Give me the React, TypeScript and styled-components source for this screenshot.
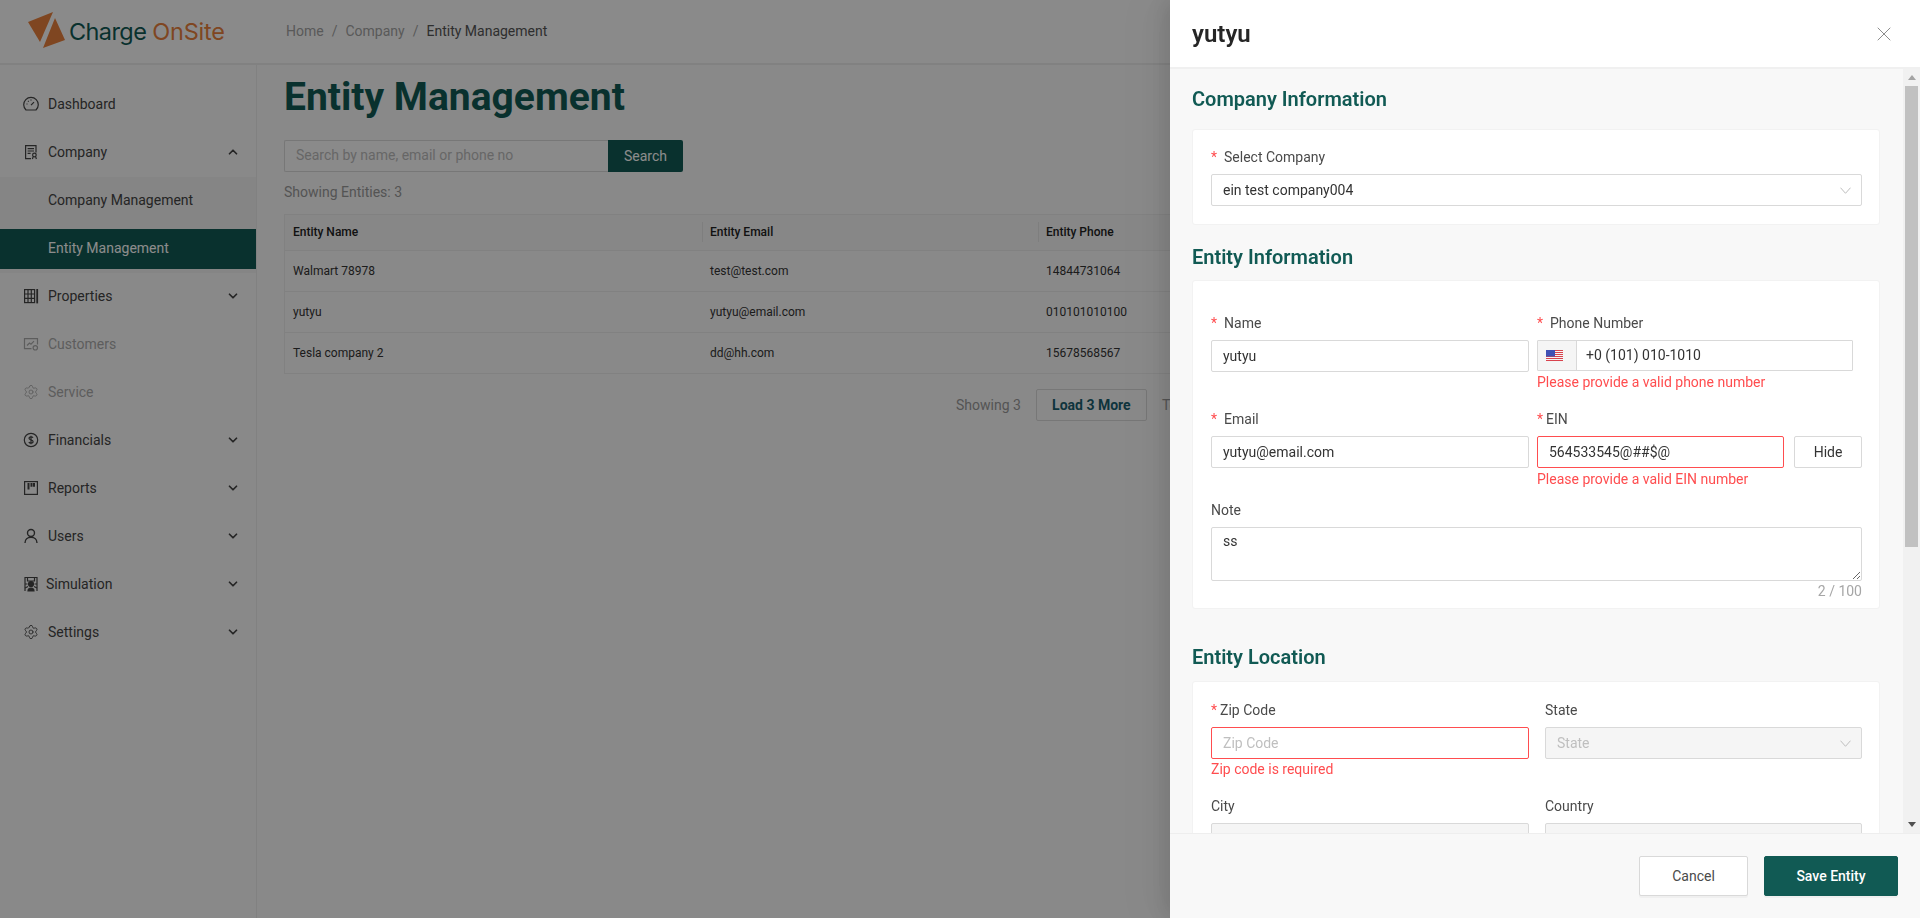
import React from "react";
import styled, { createGlobalStyle } from "styled-components";
import { ChevronDown, ChevronUp, Settings, X } from "lucide-react";

const Global = createGlobalStyle`
  html, body { margin: 0; height: 100%; overflow: hidden; }
  body { font-family: Roboto, "Liberation Sans", sans-serif; font-size: 14px; color: #333; background: #fafafa; }
  * { box-sizing: border-box; }
`;

const Page = styled.div`
  height: 100vh;
  display: grid;
  grid-template-rows: 65px 1fr;
`;
const TopBar = styled.header`
  display: flex;
  align-items: center;
  background: #fcfcfc;
  border-bottom: 2px solid #ececec;
  padding-bottom: 1px;
`;
const LogoWrap = styled.div`
  width: 286px;
  padding-left: 27px;
  display: flex;
  align-items: center;
  gap: 3px;
`;
const LogoText = styled.span`
  font-family: Inter, Roboto, sans-serif;
  font-size: 23.5px;
  letter-spacing: -0.6px;
  color: #115a54;
  white-space: nowrap;
`;
const LogoAccent = styled.span`
  color: #e8803c;
  letter-spacing: -0.2px;
`;
const Crumbs = styled.nav`
  display: flex;
  gap: 8px;
  color: #a3a3a3;
`;
const CrumbNow = styled.span`
  color: #555;
`;
const Shell = styled.div`
  display: grid;
  grid-template-columns: 257px 1fr;
  min-height: 0;
`;
const Side = styled.aside`
  background: #fafafa;
  border-right: 1px solid #ececec;
  padding-top: 19px;
`;
const SideItem = styled.div<{ $active?: boolean; $off?: boolean; $gap?: number }>`
  height: 40px;
  margin-bottom: 8px;
  padding: 0 16px 0 24px;
  display: flex;
  align-items: center;
  gap: ${(p) => p.$gap ?? 10}px;
  color: ${(p) => (p.$active ? "#fff" : p.$off ? "#aaa" : "#444")};
  background: ${(p) => (p.$active ? "#115a54" : "transparent")};
`;
const SideLabel = styled.span`
  flex: 1;
`;
const SubList = styled.div`
  background: #f2f2f2;
  padding: 3px 0 4px;
  margin: -3px 0 3px;
`;
const SubItem = styled(SideItem)`
  padding-left: 48px;
  padding-bottom: ${(p) => (p.$active ? 2 : 0)}px;
  margin-bottom: 9px;
  &:last-child { margin-bottom: 0; }
`;
const IconSvg = styled.svg`
  width: 16px;
  height: 16px;
  flex: none;
  fill: none;
  stroke: currentColor;
  stroke-width: 1.2;
  margin: 0 -1px;
`;
const GearIcon = styled(Settings)`
  flex: none;
  margin: 0 -1px;
`;
const Main = styled.main`
  padding: 10px 0 0 27px;
  min-width: 0;
`;
const Title = styled.h1`
  margin: 0 0 20px;
  font-size: 39px;
  line-height: 45px;
  font-weight: 700;
  color: #115a54;
`;
const SearchRow = styled.div`
  display: flex;
  height: 32px;
`;
const SearchInput = styled.input`
  width: 324px;
  padding: 0 11px 2px;
  border: 1px solid #d9d9d9;
  border-right: 0;
  border-radius: 2px 0 0 2px;
  background: #fcfcfc;
  font: inherit;
  &::placeholder { color: #bbb; }
`;
const SearchButton = styled.button`
  width: 75px;
  border: 0;
  border-radius: 0 2px 2px 0;
  background: #115a54;
  color: #fff;
  font: inherit;
`;
const Count = styled.div`
  margin: 10px 0 11px;
  line-height: 21px;
  color: #999;
`;
const Table = styled.div`
  width: 1612px;
  border: 1px solid #ececec;
  border-bottom: 0;
  font-size: 12px;
`;
const TRow = styled.div<{ $head?: boolean }>`
  height: ${(p) => (p.$head ? 36 : 41)}px;
  padding-bottom: ${(p) => (p.$head ? 2 : 0)}px;
  display: grid;
  grid-template-columns: 417px 336px 1fr;
  align-items: center;
  border-bottom: 1px solid #ececec;
  background: ${(p) => (p.$head ? "#f6f6f6" : "#fafafa")};
  font-weight: ${(p) => (p.$head ? 500 : 400)};
  color: ${(p) => (p.$head ? "#222" : "#333")};
`;
const TCell = styled.div<{ $divider?: boolean }>`
  padding-left: 7px;
  line-height: 20px;
  border-left: ${(p) => (p.$divider ? "1px solid #e6e6e6" : "1px solid transparent")};
`;
const Pager = styled.div`
  margin-top: 15px;
  width: 1612px;
  padding-left: 672px;
  display: flex;
  align-items: center;
  gap: 15px;
  color: #999;
`;
const LoadMore = styled.button`
  width: 111px;
  height: 32px;
  border: 1px solid #d9d9d9;
  border-radius: 2px;
  background: transparent;
  color: #1b5f70;
  font: inherit;
  font-weight: 700;
`;

const Overlay = styled.div`
  position: fixed;
  inset: 0;
  background: rgba(0, 0, 0, 0.45);
`;
const Drawer = styled.aside`
  position: fixed;
  top: 0;
  right: 0;
  bottom: 0;
  width: 750px;
  display: grid;
  grid-template-rows: 69px 1fr 85px;
  background: #fff;
  box-shadow: -6px 0 16px rgba(0, 0, 0, 0.08), -9px 0 28px rgba(0, 0, 0, 0.05), -12px 0 48px 16px rgba(0, 0, 0, 0.03);
`;
const DrawerHead = styled.div`
  display: flex;
  align-items: center;
  justify-content: space-between;
  padding: 0 24px 0 22px;
  border-bottom: 2px solid #f0f0f0;
`;
const DrawerTitle = styled.h2`
  margin: 0;
  font-size: 24px;
  font-weight: 600;
  color: #262626;
`;
const CloseBtn = styled.span`
  display: flex;
  color: #8c8c8c;
`;
const DrawerMiddle = styled.div`
  display: flex;
  min-height: 0;
  background: #f8f8f8;
`;
const DrawerBody = styled.div`
  flex: 1;
  min-width: 0;
  overflow: hidden;
  padding: 16px 23px 16px 22px;
`;
const ScrollTrack = styled.div`
  width: 17px;
  flex: none;
  background: #f1f1f1;
  display: flex;
  flex-direction: column;
`;
const ScrollArrow = styled.div<{ $down?: boolean }>`
  height: 17px;
  flex: none;
  display: flex;
  align-items: center;
  justify-content: center;
  &::before {
    content: "";
    border-left: 4.5px solid transparent;
    border-right: 4.5px solid transparent;
    border-bottom: ${(p) => (p.$down ? "0" : "5px solid #a3a3a3")};
    border-top: ${(p) => (p.$down ? "5px solid #505050" : "0")};
  }
`;
const ScrollThumb = styled.div`
  height: 461px;
  margin: 0 2px;
  background: #c1c1c1;
`;
const ScrollRest = styled.div`
  flex: 1;
`;
const SectionTitle = styled.h3<{ $after: number }>`
  margin: 0 0 ${(p) => p.$after}px;
  font-size: 20px;
  line-height: 28px;
  font-weight: 600;
  color: #115a54;
`;
const Card = styled.section<{ $top: number; $after: number; $bottom?: number }>`
  background: #fff;
  border: 1px solid #f2f2f2;
  border-radius: 3px;
  padding: ${(p) => p.$top}px 17px ${(p) => p.$bottom ?? 7}px 18px;
  margin-bottom: ${(p) => p.$after}px;
`;
const FormRow = styled.div<{ $gutter: number; $after: number }>`
  display: grid;
  grid-template-columns: 318px 1fr;
  column-gap: ${(p) => p.$gutter}px;
  margin-bottom: ${(p) => p.$after}px;
`;
const Label = styled.div<{ $gap?: number }>`
  height: 22px;
  line-height: 22px;
  margin-bottom: 6px;
  color: #4a4a4a;
  display: flex;
  gap: ${(p) => p.$gap ?? 7}px;
`;
const Star = styled.span`
  color: #ff4d4f;
`;
const Input = styled.input<{ $error?: boolean; $off?: boolean }>`
  width: 100%;
  height: 32px;
  padding: 0 11px;
  border: 1px solid ${(p) => (p.$error ? "#ff4d4f" : "#d9d9d9")};
  border-radius: 2px;
  background: ${(p) => (p.$off ? "#f5f5f5" : "#fff")};
  font: inherit;
  color: #333;
  outline: none;
  &::placeholder { color: #bfbfbf; }
`;
const SelectBox = styled.div<{ $off?: boolean; $last?: boolean }>`
  height: 32px;
  margin-bottom: ${(p) => (p.$last ? 11 : 0)}px;
  padding: 0 10px 0 11px;
  display: flex;
  align-items: center;
  justify-content: space-between;
  border: 1px solid #d9d9d9;
  border-radius: 2px;
  background: ${(p) => (p.$off ? "#f5f5f5" : "#fff")};
  color: ${(p) => (p.$off ? "#bfbfbf" : "#333")};
`;
const Caret = styled.svg`
  width: 11px;
  height: 7px;
  fill: none;
  stroke: #bfbfbf;
  stroke-width: 1;
`;
const PhoneBox = styled.div`
  width: 316px;
  height: 31px;
  margin-top: 1px;
  display: flex;
  border: 1px solid #d9d9d9;
  border-radius: 1px;
`;
const FlagBox = styled.div`
  width: 39px;
  background: #f5f5f5;
  border-right: 1px solid #d9d9d9;
  display: flex;
  align-items: center;
  justify-content: center;
  padding-right: 5px;
`;
const PhoneText = styled.div`
  padding-left: 9px;
  line-height: 29px;
  color: #333;
`;
const ErrorText = styled.div<{ $low?: boolean }>`
  height: 20px;
  line-height: ${(p) => (p.$low ? 22 : 20)}px;
  color: #ff4d4f;
`;
const EinRow = styled.div`
  display: grid;
  grid-template-columns: 247px 68px;
  column-gap: 10px;
`;
const HideBtn = styled.button`
  height: 32px;
  border: 1px solid #d9d9d9;
  border-radius: 2px;
  background: #fff;
  font: inherit;
  color: #333;
`;
const NoteArea = styled.textarea`
  display: block;
  width: 100%;
  height: 54px;
  padding: 2px 11px 4px;
  border: 1px solid #d9d9d9;
  border-radius: 2px;
  font: inherit;
  line-height: 22px;
  color: #333;
  outline: none;
`;
const Counter = styled.div`
  text-align: right;
  line-height: 20px;
  color: #a6a6a6;
`;
const DrawerFoot = styled.div`
  background: #f8f8f8;
  border-top: 1px solid #eee;
  display: flex;
  justify-content: flex-end;
  gap: 16px;
  padding: 22px 22px 0 0;
`;
const FootBtn = styled.button<{ $primary?: boolean }>`
  width: ${(p) => (p.$primary ? 134 : 109)}px;
  height: 40px;
  border: 1px solid ${(p) => (p.$primary ? "#115a54" : "#d9d9d9")};
  border-radius: 2px;
  background: ${(p) => (p.$primary ? "#115a54" : "#fff")};
  color: ${(p) => (p.$primary ? "#fff" : "#4a4a4a")};
  font: inherit;
  font-weight: ${(p) => (p.$primary ? 500 : 400)};
  box-shadow: 0 2px 0 rgba(0, 0, 0, 0.03);
`;

const Logo = () => (
  <svg width="39" height="38" viewBox="0 0 39 38" fill="#e8803c">
    <path d="M1 10 L26 0 L13 30 Z" />
    <path d="M28 6 L38 28 L16 36 Z" />
  </svg>
);
const Flag = () => (
  <svg width="17" height="12" viewBox="0 0 17 12">
    <rect width="17" height="12" fill="#f4f4f4" />
    {[0, 2, 4, 6, 8, 10].map((y) => (
      <rect key={y} y={y} width="17" height="1" fill="#d9434e" />
    ))}
    <rect width="9" height="6.5" fill="#3f51b5" />
  </svg>
);
const Gauge = () => (
  <IconSvg viewBox="0 0 16 16"><path d="M3 14h10a7.300 7.300 0 1 0-10 0z" /><path d="M8 9.200l3-3M3.500 8h1M8 3.500v1M5 5l.7.7" /></IconSvg>
);
const CompanyIcon = () => (
  <IconSvg viewBox="0 0 16 16" stroke="#115a54"><path d="M8 14.600H2.600V1.600h10.400v7" /><path d="M4.600 4.600h6.400M4.600 7h6.400M4.600 9.400h3" /><circle cx="11.400" cy="11" r="1.800" /><path d="M9.400 15l.8-2.400M13.400 15l-.8-2.400" /></IconSvg>
);
const BuildingIcon = () => (
  <IconSvg viewBox="0 0 16 16"><rect x="1.600" y="1.600" width="10" height="13" /><path d="M1.600 6h10M1.600 10.300h10M5 1.600v13M8.300 1.600v13" /><path d="M14.200 1v14.400" strokeWidth="1.800" /></IconSvg>
);
const CustomersIcon = () => (
  <IconSvg viewBox="0 0 16 16"><path d="M8.500 12.600H1.500V2.600h13v6" /><path d="M4 9.500l2.500-2.500 1.500 1.200 3-3" /><circle cx="12.300" cy="11.800" r="2.200" /></IconSvg>
);
const DollarIcon = () => (
  <IconSvg viewBox="0 0 16 16"><circle cx="8" cy="8" r="6.700" /><path d="M10 5.800c-.4-.7-1.100-1-2-1-1.200 0-2 .6-2 1.500 0 2.200 4.100 1.100 4.100 3.300 0 1-.9 1.600-2.100 1.600-1 0-1.800-.4-2.200-1.100M8 3.800v8.400" /></IconSvg>
);
const BoardIcon = () => (
  <IconSvg viewBox="0 0 16 16"><rect x="1.600" y="1.600" width="12.800" height="12.800" /><path d="M5.500 3v6.500M8.500 3v3.800M11 3v3.800" strokeWidth="2" /></IconSvg>
);
const UserIcon = () => (
  <IconSvg viewBox="0 0 16 16"><circle cx="8" cy="5" r="3.500" strokeWidth="1.400" /><path d="M2 15c0-3.500 2.500-5.800 6-5.800s6 2.300 6 5.800" strokeWidth="1.400" /></IconSvg>
);
const SimIcon = () => (
  <IconSvg viewBox="0 0 14 16"><path d="M1 15V1.500h12V15" /><path d="M3.500 1.500v3.500h7V1.500M1 8h2.500M10.500 8H13M1 12l3-1.500M13 12l-3-1.500" /><circle cx="7" cy="8" r="2.500" fill="currentColor" /><path d="M4 15c0-2 1.200-3 3-3s3 1 3 3z" fill="currentColor" /></IconSvg>
);
const More = ({ open }: { open?: boolean }) =>
  open ? <ChevronUp size={14} strokeWidth={3} /> : <ChevronDown size={14} strokeWidth={3} />;
const SelectCaret = () => (
  <Caret viewBox="0 0 11 7"><path d="M.5 .7l5 5.600 5-5.600" /></Caret>
);

const rows = [
  ["Walmart 78978", "test@test.com", "14844731064"],
  ["yutyu", "yutyu@email.com", "010101010100"],
  ["Tesla company 2", "dd@hh.com", "15678568567"],
];

export default function App() {
  return (
    <>
      <Global />
      <Page>
        <TopBar>
          <LogoWrap>
            <Logo />
            <LogoText>Charge <LogoAccent>OnSite</LogoAccent></LogoText>
          </LogoWrap>
          <Crumbs>
            <span>Home</span><span>/</span><span>Company</span><span>/</span><CrumbNow>Entity Management</CrumbNow>
          </Crumbs>
        </TopBar>
        <Shell>
          <Side>
            <SideItem><Gauge /><SideLabel>Dashboard</SideLabel></SideItem>
            <SideItem><CompanyIcon /><SideLabel>Company</SideLabel><More open /></SideItem>
            <SubList>
              <SubItem>Company Management</SubItem>
              <SubItem $active>Entity Management</SubItem>
            </SubList>
            <SideItem><BuildingIcon /><SideLabel>Properties</SideLabel><More /></SideItem>
            <SideItem $off><CustomersIcon /><SideLabel>Customers</SideLabel></SideItem>
            <SideItem $off><GearIcon size={16} strokeWidth={1.3} /><SideLabel>Service</SideLabel></SideItem>
            <SideItem><DollarIcon /><SideLabel>Financials</SideLabel><More /></SideItem>
            <SideItem><BoardIcon /><SideLabel>Reports</SideLabel><More /></SideItem>
            <SideItem><UserIcon /><SideLabel>Users</SideLabel><More /></SideItem>
            <SideItem $gap={8}><SimIcon /><SideLabel>Simulation</SideLabel><More /></SideItem>
            <SideItem><GearIcon size={16} strokeWidth={1.3} /><SideLabel>Settings</SideLabel><More /></SideItem>
          </Side>
          <Main>
            <Title>Entity Management</Title>
            <SearchRow>
              <SearchInput placeholder="Search by name, email or phone no" />
              <SearchButton>Search</SearchButton>
            </SearchRow>
            <Count>Showing Entities: 3</Count>
            <Table>
              <TRow $head>
                <TCell>Entity Name</TCell>
                <TCell $divider>Entity Email</TCell>
                <TCell $divider>Entity Phone</TCell>
              </TRow>
              {rows.map((r) => (
                <TRow key={r[0]}>
                  {r.map((c) => <TCell key={c}>{c}</TCell>)}
                </TRow>
              ))}
            </Table>
            <Pager>
              <span>Showing 3</span>
              <LoadMore>Load 3 More</LoadMore>
              <span>Total: 3</span>
            </Pager>
          </Main>
        </Shell>
      </Page>
      <Overlay />
      <Drawer>
        <DrawerHead>
          <DrawerTitle>yutyu</DrawerTitle>
          <CloseBtn><X size={24} strokeWidth={1} /></CloseBtn>
        </DrawerHead>
        <DrawerMiddle>
          <DrawerBody>
            <SectionTitle $after={16}>Company Information</SectionTitle>
            <Card $top={16} $after={18}>
              <Label><Star>*</Star>Select Company</Label>
              <SelectBox $last>ein test company004<SelectCaret /></SelectBox>
            </Card>
            <SectionTitle $after={9}>Entity Information</SectionTitle>
            <Card $top={31} $after={34}>
              <FormRow $gutter={8} $after={17}>
                <div>
                  <Label><Star>*</Star>Name</Label>
                  <Input readOnly value="yutyu" />
                </div>
                <div>
                  <Label><Star>*</Star>Phone Number</Label>
                  <PhoneBox>
                    <FlagBox><Flag /></FlagBox>
                    <PhoneText>+0 (101) 010-1010</PhoneText>
                  </PhoneBox>
                  <ErrorText $low>Please provide a valid phone number</ErrorText>
                </div>
              </FormRow>
              <FormRow $gutter={8} $after={11}>
                <div>
                  <Label><Star>*</Star>Email</Label>
                  <Input readOnly value="yutyu@email.com" />
                </div>
                <div>
                  <Label $gap={3}><Star>*</Star>EIN</Label>
                  <EinRow>
                    <Input $error readOnly value="564533545@##$@" />
                    <HideBtn>Hide</HideBtn>
                  </EinRow>
                  <ErrorText $low>Please provide a valid EIN number</ErrorText>
                </div>
              </FormRow>
              <Label>Note</Label>
              <NoteArea readOnly value="ss" />
              <Counter>2 / 100</Counter>
            </Card>
            <SectionTitle $after={10}>Entity Location</SectionTitle>
            <Card $top={17} $after={0} $bottom={120}>
              <FormRow $gutter={16} $after={16}>
                <div>
                  <Label $gap={3}><Star>*</Star>Zip Code</Label>
                  <Input $error placeholder="Zip Code" />
                  <ErrorText>Zip code is required</ErrorText>
                </div>
                <div>
                  <Label>State</Label>
                  <SelectBox $off>State<SelectCaret /></SelectBox>
                </div>
              </FormRow>
              <FormRow $gutter={16} $after={16}>
                <div>
                  <Label>City</Label>
                  <Input $off disabled placeholder="City" />
                </div>
                <div>
                  <Label>Country</Label>
                  <Input $off disabled placeholder="Country" />
                </div>
              </FormRow>
            </Card>
          </DrawerBody>
          <ScrollTrack>
            <ScrollArrow />
            <ScrollThumb />
            <ScrollRest />
            <ScrollArrow $down />
          </ScrollTrack>
        </DrawerMiddle>
        <DrawerFoot>
          <FootBtn>Cancel</FootBtn>
          <FootBtn $primary>Save Entity</FootBtn>
        </DrawerFoot>
      </Drawer>
    </>
  );
}
